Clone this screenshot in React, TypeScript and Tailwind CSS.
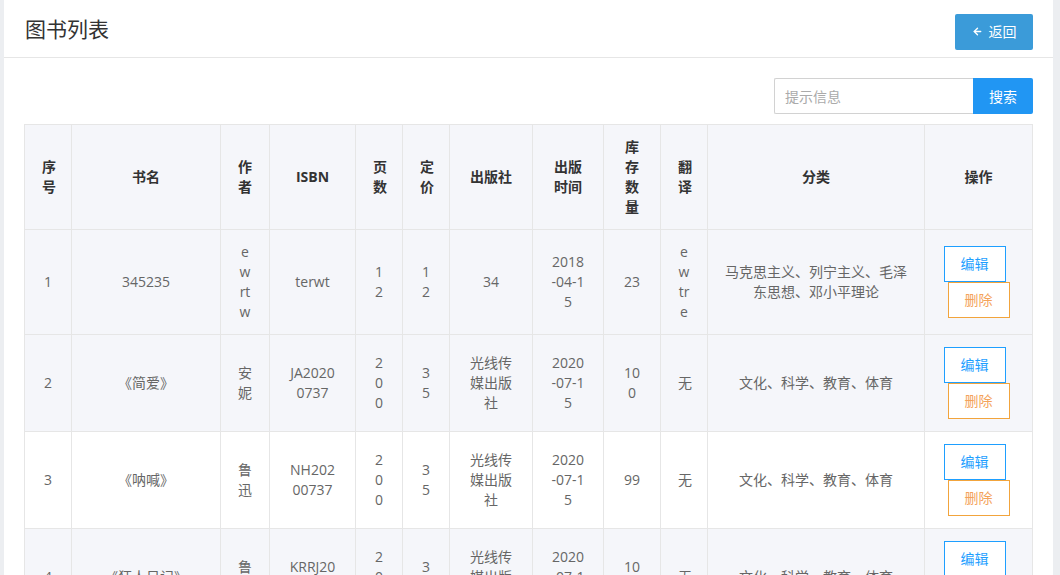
import { ArrowLeft } from "lucide-react";

const cols = [47, 149, 49, 86, 47, 47, 83, 71, 57, 47, 217, 108];

const heads = ["序号", "书名", "作者", "ISBN", "页数", "定价", "出版社", "出版时间", "库存数量", "翻译", "分类", "操作"];

const books = [
  {
    id: 1,
    name: "345235",
    author: "ewrtw",
    isbn: "terwt",
    pages: "12",
    price: "12",
    press: "34",
    date: "2018-04-15",
    stock: "23",
    trans: "ewtre",
    type: "马克思主义、列宁主义、毛泽东思想、邓小平理论",
    striped: true,
  },
  {
    id: 2,
    name: "《简爱》",
    author: "安妮",
    isbn: "JA20200737",
    pages: "200",
    price: "35",
    press: "光线传媒出版社",
    date: "2020-07-15",
    stock: "100",
    trans: "无",
    type: "文化、科学、教育、体育",
    striped: true,
  },
  {
    id: 3,
    name: "《呐喊》",
    author: "鲁迅",
    isbn: "NH20200737",
    pages: "200",
    price: "35",
    press: "光线传媒出版社",
    date: "2020-07-15",
    stock: "99",
    trans: "无",
    type: "文化、科学、教育、体育",
    striped: false,
  },
  {
    id: 4,
    name: "《狂人日记》",
    author: "鲁迅",
    isbn: "KRRJ20200737",
    pages: "200",
    price: "35",
    press: "光线传媒出版社",
    date: "2020-07-15",
    stock: "100",
    trans: "无",
    type: "文化、科学、教育、体育",
    striped: true,
  },
];

const cell = "border border-[#e6e6e6] px-[17px] py-[12px] break-all align-middle";

export default function App() {
  return (
    <div className="h-[575px] overflow-hidden bg-[#eceef1] flex pl-[4px] pr-[9px] font-['Open_Sans','Noto_Sans_CJK_SC',sans-serif]">
      <div className="flex-1 bg-white">
        {/* header */}
        <div className="h-[57px] box-content border-b border-[#e6e6e6] px-[20px] flex items-center justify-between">
          <h1 className="text-[21px] leading-[28px] text-[#333] pl-[1px]">图书列表</h1>
          <button className="mt-[6px] h-[36px] w-[78px] rounded-[2px] bg-[#3b9bd9] text-white text-[14px] flex items-center justify-center gap-[6px]">
            <ArrowLeft size={11} strokeWidth={3} />
            返回
          </button>
        </div>

        <div className="px-[20px] pt-[20px]">
          {/* search */}
          <div className="flex justify-end mb-[10px]">
            <input
              placeholder="提示信息"
              className="h-[36px] w-[199px] border border-[#d2d2d2] border-r-0 rounded-l-[2px] px-[10px] text-[14px] text-[#666] placeholder:text-[#aaa] outline-none"
            />
            <button className="h-[36px] w-[60px] bg-[#2196f3] text-white text-[14px] rounded-r-[2px]">搜索</button>
          </div>

          {/* table */}
          <table className="w-[1008px] table-fixed border-collapse text-center text-[14px] leading-[20px] text-[#666]">
            <colgroup>
              {cols.map((w, i) => (
                <col key={i} style={{ width: w }} />
              ))}
            </colgroup>
            <thead>
              <tr className="bg-[#f5f6fa]">
                {heads.map((h) => (
                  <th key={h} className={`${cell} font-bold text-[#333]`}>
                    {h}
                  </th>
                ))}
              </tr>
            </thead>
            <tbody>
              {books.map((b) => (
                <tr key={b.id} className={b.striped ? "bg-[#f5f6fa]" : "bg-white"}>
                  <td className={cell}>{b.id}</td>
                  <td className={cell}>{b.name}</td>
                  <td className={cell}>{b.author}</td>
                  <td className={cell}>{b.isbn}</td>
                  <td className={cell}>{b.pages}</td>
                  <td className={cell}>{b.price}</td>
                  <td className={cell}>{b.press}</td>
                  <td className={cell}>{b.date}</td>
                  <td className={cell}>{b.stock}</td>
                  <td className={cell}>{b.trans}</td>
                  <td className="border border-[#e6e6e6] px-[16px] py-[12px] break-all align-middle">{b.type}</td>
                  <td className={cell}>
                    <div className="flex flex-col items-center">
                      <button className="h-[36px] w-[62px] mr-[8px] border border-[#1e9fff] bg-white text-[#1e9fff] text-[14px]">
                        编辑
                      </button>
                      <button className="h-[36px] w-[62px] border border-[#f2a43c] bg-white text-[#f4a35a] text-[14px]">
                        删除
                      </button>
                    </div>
                  </td>
                </tr>
              ))}
            </tbody>
          </table>
        </div>
      </div>
    </div>
  );
}
